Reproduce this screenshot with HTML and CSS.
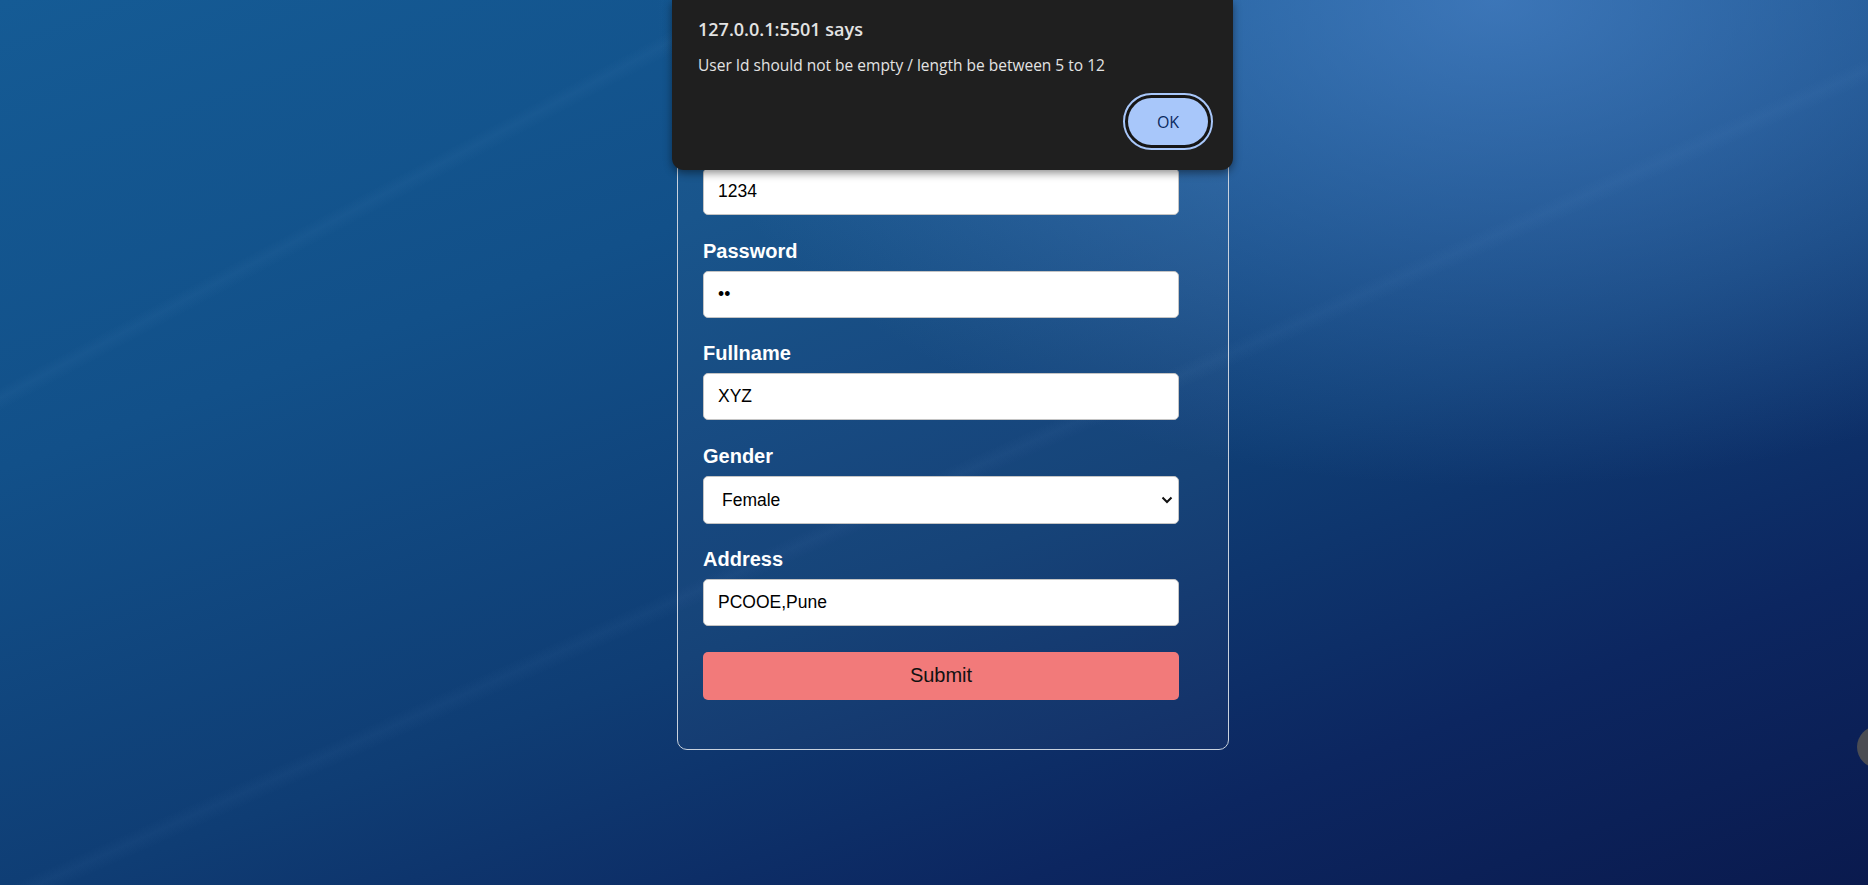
FILE: index.html
```html
<!DOCTYPE html>
<html lang="en">
<head>
<meta charset="utf-8">
<title>Registration</title>
<link rel="stylesheet" href="styles.css">
</head>
<body>
<div class="page">
  <form class="card">
    <div class="field">
      <label class="label">User Id</label>
      <input class="input" type="text" value="1234">
    </div>
    <div class="field">
      <label class="label">Password</label>
      <input class="input" type="password" value="ab">
    </div>
    <div class="field">
      <label class="label">Fullname</label>
      <input class="input" type="text" value="XYZ">
    </div>
    <div class="field">
      <label class="label">Gender</label>
      <div class="select-wrap">
        <select class="input select">
          <option>Male</option>
          <option selected>Female</option>
        </select>
        <svg class="chevron" width="12" height="8" viewBox="0 0 12 8"><path d="M1.5 1.5 L6 6 L10.5 1.5" fill="none" stroke="#111" stroke-width="2"/></svg>
      </div>
    </div>
    <div class="field">
      <label class="label">Address</label>
      <input class="input" type="text" value="PCOOE,Pune">
    </div>
    <button class="submit" type="button">Submit</button>
  </form>
</div>

<div class="alert">
  <div class="alert-title">127.0.0.1:5501 says</div>
  <div class="alert-msg">User Id should not be empty / length be between 5 to 12</div>
  <div class="alert-actions"><button class="ok" type="button">OK</button></div>
</div>

<div class="fab"></div>
</body>
</html>
```

FILE: styles.css
```css
html, body {
  margin: 0;
  height: 100%;
}
body {
  width: 1868px;
  height: 885px;
  overflow: hidden;
  position: relative;
  font-family: "Liberation Sans", Arial, sans-serif;
  background:
    linear-gradient(152deg, transparent 20.6%, rgba(140,190,240,0.045) 21.2%, transparent 21.9%),
    linear-gradient(156deg, transparent 51.8%, rgba(140,190,240,0.04) 52.5%, transparent 53.3%),
    radial-gradient(ellipse 45% 55% at 80% 0%, rgba(78,135,205,0.7), rgba(78,135,205,0) 100%),
    linear-gradient(160deg, #155b95 0%, #125089 30%, #0f3d74 58%, #0c2660 80%, #0a1a4e 100%);
}

.page {
  display: flex;
  justify-content: center;
  padding-left: 38px;
  padding-top: 111px;
}

.card {
  box-sizing: border-box;
  width: 552px;
  border: 1px solid #c9d2de;
  border-radius: 10px;
  padding: 25px 49px 49px 25px;
  background: rgba(255,255,255,0.03);
  display: flex;
  flex-direction: column;
}

.field {
  display: flex;
  flex-direction: column;
  margin-bottom: 24.5px;
}
.field:last-of-type {
  margin-bottom: 26px;
}

.label {
  color: #ffffff;
  font-weight: bold;
  font-size: 20px;
  line-height: 23px;
  margin-bottom: 8px;
}

.input {
  box-sizing: border-box;
  width: 100%;
  height: 47px;
  margin: 0;
  border: 1px solid #c4c4c4;
  border-radius: 5px;
  background: #ffffff;
  padding: 0 14px;
  font-family: "Liberation Sans", Arial, sans-serif;
  font-size: 17.5px;
  color: #000;
  outline: none;
}

.select-wrap {
  position: relative;
}
.select {
  appearance: none;
  -webkit-appearance: none;
  padding-left: 18px;
  height: 48px;
}
.chevron {
  position: absolute;
  right: 6px;
  top: 20px;
  pointer-events: none;
}

.submit {
  box-sizing: border-box;
  width: 100%;
  height: 48px;
  border: none;
  border-radius: 5px;
  background: #f27a7a;
  color: #111;
  font-family: "Liberation Sans", Arial, sans-serif;
  font-size: 20px;
  line-height: 22px;
  padding: 0 0 3px;
}

/* browser alert dialog */
.alert {
  position: absolute;
  left: 672px;
  top: 0;
  box-sizing: border-box;
  width: 561px;
  height: 170px;
  background: #1f1f1f;
  border-radius: 0 0 12px 12px;
  box-shadow: 0 3px 8px rgba(0,0,0,0.45);
  padding: 17px 25px 0 26px;
  display: flex;
  flex-direction: column;
  font-family: "Open Sans", "Noto Sans", sans-serif;
  color: #e3e3e3;
}
.alert-title {
  font-size: 18px;
  font-weight: 600;
  line-height: 24px;
}
.alert-msg {
  margin-top: 14px;
  font-size: 15.5px;
  line-height: 20px;
}
.alert-actions {
  display: flex;
  justify-content: flex-end;
  margin-top: 23px;
}
.ok {
  box-sizing: border-box;
  width: 80px;
  height: 47px;
  border: none;
  border-radius: 24px;
  background: #a8c7fa;
  color: #0b2a5e;
  font-family: "Open Sans", "Noto Sans", sans-serif;
  font-size: 16px;
  font-weight: 500;
  outline: 2px solid #a8c7fa;
  outline-offset: 3px;
  box-shadow: 0 0 0 3px #161616;
}

.fab {
  position: absolute;
  left: 1857px;
  top: 726px;
  width: 42px;
  height: 42px;
  border-radius: 50%;
  background: #4a4c53;
}
```
